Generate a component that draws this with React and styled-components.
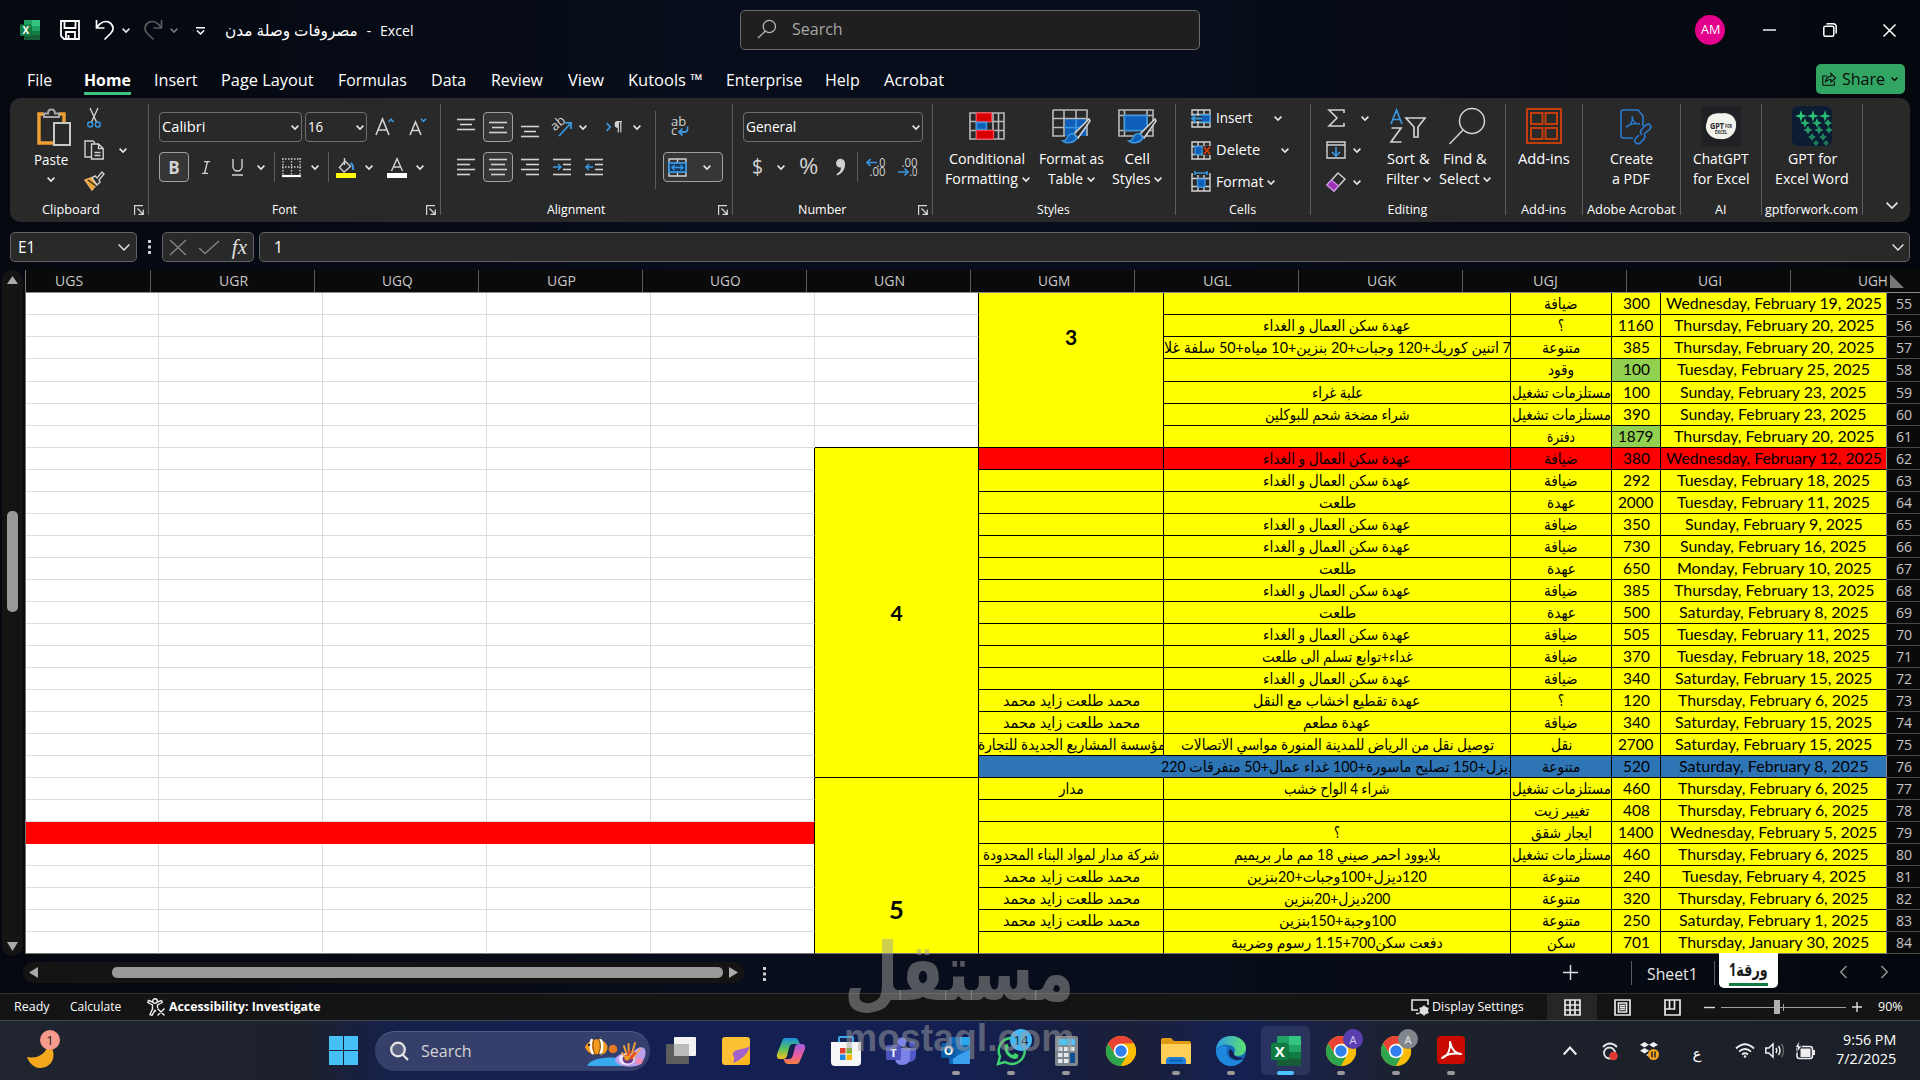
import React, { useLayoutEffect, useRef, useState } from 'react';
import styled, { createGlobalStyle } from 'styled-components';

const ui = '"Open Sans", "DejaVu Sans", sans-serif';
const sheetFont = 'Lato, "DejaVu Sans", sans-serif';

const colors = {
  ribbon: '#292929',
  line: '#5c5c5c',
  icon: '#d2d2d2',
  blue: '#3a96dd',
  deepBlue: '#0f5fb8',
  yellow: '#ffff00',
  red: '#ff0000',
  green: '#92d050',
  steel: '#2e75b6',
};

const GlobalStyle = createGlobalStyle`
  * { box-sizing: border-box; }
  body {
    margin: 0;
    background: #05080f;
    overflow: hidden;
  }
`;

/* ---------- text that keeps a given width ---------- */

const FitBox = styled.span`
  display: inline-block;
  flex: none;
  text-align: left;
  direction: ltr;
  white-space: pre;
  line-height: 1.3;
`;

const FitInner = styled.span`
  display: inline-block;
  transform-origin: 0 50%;
`;

const Fit = ({ w, rtl, children }) => {
  const ref = useRef(null);
  const [scale, setScale] = useState(1);
  useLayoutEffect(() => {
    setScale(w / ref.current.offsetWidth);
  }, [w, children]);
  return (
    <FitBox style={{ width: w }}>
      <FitInner
        ref={ref}
        dir={rtl ? 'rtl' : 'ltr'}
        style={{ transform: `scaleX(${scale})` }}
      >
        {children}
      </FitInner>
    </FitBox>
  );
};

/* ---------- icons ---------- */

const Svg = styled.svg`
  display: block;
  flex: none;
  overflow: visible;
`;

const Ico = ({ w = 20, h = 20, sw = 1.4, color = colors.icon, children }) => (
  <Svg
    width={w}
    height={h}
    viewBox={`0 0 ${w} ${h}`}
    fill="none"
    stroke={color}
    strokeWidth={sw}
  >
    {children}
  </Svg>
);

const Chevron = ({ size = 8, color = '#e6e6e6', sw = 1.6 }) => (
  <Ico w={size} h={size / 2 + 1} sw={sw} color={color}>
    <path d={`M.6 .6 L${size / 2} ${size / 2} L${size - 0.6} .6`} />
  </Ico>
);

const ExcelLogo = ({ s = 20 }) => (
  <Svg width={s} height={s} viewBox="0 0 20 20">
    <rect x="4" y="0" width="16" height="20" rx="1" fill="#21a366" />
    <path d="M12 0h7a1 1 0 0 1 1 1v5h-8z" fill="#33c481" />
    <path d="M4 6h8v5H4z" fill="#107c41" />
    <path d="M4 11h16v8a1 1 0 0 1-1 1H5a1 1 0 0 1-1-1z" fill="#185c37" />
    <path d="M12 11h8v4h-8z" fill="#107c41" />
    <rect x="0" y="4.5" width="11.5" height="11.5" rx="1" fill="#107c41" />
    <text
      x="5.8"
      y="13.8"
      fontSize="10"
      fontWeight="700"
      fill="#fff"
      textAnchor="middle"
      fontFamily="Open Sans, sans-serif"
    >
      X
    </text>
  </Svg>
);

const SaveIcon = () => (
  <Ico color="#fff" sw={1.8}>
    <path d="M1 1h18v18H4l-3-3z M4.500 1v7h11V1 M6 19v-7h9v7 M8.500 19v-4" />
  </Ico>
);

const UndoIcon = ({ color = '#fff', flip }) => (
  <Ico color={color} sw={1.7}>
    <path
      transform={flip ? 'translate(20 0) scale(-1 1)' : undefined}
      d="M1.500 0v8h8 M1.800 7.500C5 3 10 0 14.500 2.500C19 5.500 19 10 16 13L9.500 19.500"
    />
  </Ico>
);

const SearchIcon = ({ w = 18, color = '#b5b5b5' }) => (
  <Ico w={w} h={w} color={color} sw={1.3}>
    <circle cx={w * 0.63} cy={w * 0.36} r={w * 0.34} />
    <path d={`M${w * 0.4} ${w * 0.62}L0 ${w}`} />
  </Ico>
);

const PasteIcon = () => (
  <Ico w={34} h={38} sw={2}>
    <path d="M6 6H2v29h14 M22 6h5v9" stroke="#f0a030" strokeWidth="3.4" />
    <path d="M7 9V5.500h4C11 0 18 0 18 5.500h4V9z" fill="#292929" stroke="#a8a8a8" />
    <rect x="17" y="15" width="16" height="22" fill="#292929" stroke="#c8c8c8" />
  </Ico>
);

const CutIcon = () => (
  <Ico w={14} h={20}>
    <path d="M3 0l6.500 14 M11 0L4.500 14" />
    <circle cx="3.200" cy="16.500" r="2.500" stroke={colors.blue} />
    <circle cx="10.800" cy="16.500" r="2.500" stroke={colors.blue} />
  </Ico>
);

const CopyIcon = () => (
  <Ico>
    <path d="M7 17H1V1h8l2 2" />
    <path d="M7.500 4h7l4.700 4.500V19H7.500z M14.500 4v4.500h4.700 M10.500 12.500h6 M10.500 15.500h6" />
  </Ico>
);

const BrushIcon = () => (
  <Ico>
    <path d="M1 9l7 10 6-7-5-6z" fill="#f0a030" stroke="#e8b060" />
    <path d="M8 7l3-2 2 2 5-6 2 2-5 6 1 2-3 3z" fill="#292929" />
    <path d="M4 9l8 6" stroke="#292929" />
  </Ico>
);

const LauncherIcon = () => (
  <Ico w={10} h={10} sw={1.2} color="#d8d8d8">
    <path d="M9 .6H.6V10 M3.500 3.500L9 9 M9.300 4.500v4.900H4.500" />
  </Ico>
);

const BordersIcon = () => (
  <Ico w={19} h={19} sw={1.3}>
    <path d="M0 1h19 M0 9h19 M1 0v17 M9.500 0v17 M18 0v17" strokeDasharray="1.500 1.500" />
    <path d="M0 18h19" strokeWidth="2.200" stroke="#fff" />
  </Ico>
);

const FillIcon = () => (
  <Ico>
    <path d="M8 2l6.500 6.500L8 14 3.500 9.500 9 3 M8.500 0v7" />
    <path d="M14.500 5c2 1 3 3 2.500 7" stroke={colors.blue} strokeWidth="2" />
    <rect x="0" y="15" width="20" height="5" fill="#ff0" stroke="none" />
  </Ico>
);

const FontColorIcon = () => (
  <Ico>
    <path d="M4.500 13L10 .8 15.500 13 M6.500 9h7" />
    <rect x="0" y="15" width="20" height="5" fill="#fff" stroke="none" />
  </Ico>
);

const GrowIcon = ({ down }) => (
  <Ico w={19} h={18} sw={1.6}>
    <path d={down ? 'M1 17L6.500 4 12 17 M3 12.500h7' : 'M1 17L7.500 1 14 17 M3.200 12h8.600'} />
    <path
      d={down ? 'M12 .8l2.500 2.500L17 .8' : 'M13.500 4l2.500-2.700L18.500 4'}
      stroke={colors.blue}
    />
  </Ico>
);

// lines: list of [x, y, width]
const LinesIcon = ({ lines, h = 18, children }) => (
  <Ico w={18} h={h} sw={1.6}>
    {lines.map(([x, y, w]) => (
      <path key={`${x}-${y}`} d={`M${x} ${y}h${w}`} />
    ))}
    {children}
  </Ico>
);

const OrientIcon = () => (
  <Ico>
    <text
      x="0"
      y="11"
      fontSize="13"
      fill={colors.icon}
      stroke="none"
      fontFamily="Open Sans, sans-serif"
      transform="rotate(-40 6 9)"
    >
      ab
    </text>
    <path d="M7 19L19 6 M12.500 5.800H19V12" stroke={colors.blue} strokeWidth="1.800" />
  </Ico>
);

const DirectionIcon = () => (
  <Ico w={17} h={12} sw={1.2}>
    <path d="M.6 2l3.600 4-3.600 4" stroke={colors.blue} strokeWidth="1.800" />
    <path d="M16 .6h-5 M12.300 .6v11 M14.800 .6v11" />
    <path d="M12 .6a2.800 2.800 0 0 0 0 5.600z" fill={colors.icon} />
  </Ico>
);

const WrapIcon = () => (
  <Ico w={18} h={20}>
    <text x="0" y="9" fontSize="13" fill={colors.icon} stroke="none" fontFamily="Open Sans, sans-serif">
      ab
    </text>
    <text x="0" y="18" fontSize="13" fill={colors.icon} stroke="none" fontFamily="Open Sans, sans-serif">
      c
    </text>
    <path d="M16.500 9.500v3c0 2-1 2.500-3 2.500H8.500 M11.500 11.500L8 15l3.500 3.500" stroke={colors.blue} strokeWidth="1.800" />
  </Ico>
);

const MergeIcon = () => (
  <Ico w={19} h={19}>
    <path d="M1 1h17v17H1z M9.500 1v4 M9.500 14v4" />
    <rect x="1" y="5" width="17" height="9" fill="#123a60" stroke={colors.blue} strokeWidth="1.800" />
    <path d="M4 9.500h11 M6.500 7L4 9.500 6.500 12 M12.500 7L15 9.500 12.500 12" stroke={colors.blue} />
  </Ico>
);

const DecimalIcon = ({ more }) => (
  <Ico w={20} h={20}>
    <text
      x="19.500"
      y="9.500"
      fontSize="12"
      textAnchor="end"
      fill={colors.icon}
      stroke="none"
      fontFamily="Open Sans, sans-serif"
      textLength={more ? 9 : 16}
      lengthAdjust="spacingAndGlyphs"
    >
      {more ? '.0' : '.00'}
    </text>
    <text
      x="19.500"
      y="19"
      fontSize="12"
      textAnchor="end"
      fill={colors.icon}
      stroke="none"
      fontFamily="Open Sans, sans-serif"
      textLength={more ? 16 : 8}
      lengthAdjust="spacingAndGlyphs"
    >
      {more ? '.00' : '.0'}
    </text>
    <path
      d={more ? 'M11 5.500H1 M4.500 2L1 5.500 4.500 9' : 'M0 15h10 M6.500 11.500L10 15l-3.500 3.500'}
      stroke={colors.blue}
      strokeWidth="1.700"
    />
  </Ico>
);

const ConditionalIcon = () => (
  <Ico w={36} h={28} sw={1.6} color="#b8b8b8">
    <path d="M1 1h34v26H1z M1 9.500h34 M1 18.500h34 M7.500 1v26 M24 1v26 M29.500 1v26" />
    <rect x="7.500" y="1" width="15" height="8.500" fill="#d80000" stroke="#ff4050" strokeWidth="1.200" />
    <rect x="7.500" y="10.500" width="10" height="7" fill={colors.deepBlue} stroke={colors.blue} />
    <rect x="7.500" y="18.500" width="17" height="8.500" fill="#d80000" stroke="#ff4050" strokeWidth="1.200" />
  </Ico>
);

const BrushOver = () => (
  <>
    <path d="M37 10L22 25l4 4L38 12z" fill="#292929" stroke="#d8d8d8" strokeWidth="1.500" />
    <path d="M22 25c-4-1-6 1-7 4-1 2-2 3-4 3 4 3 11 2 14-3z" fill={colors.deepBlue} stroke={colors.blue} />
  </>
);

const TableIcon = () => (
  <Ico w={38} h={34} sw={1.6} color="#b8b8b8">
    <path d="M13 10h22v17H13z" fill={colors.deepBlue} stroke="none" />
    <path d="M1 1h34v26 M13 27H1V1 M1 9.500h34 M1 18.500h11 M12 1v26 M24 1v9" />
    <path d="M12 18.500h23 M24 10v17" stroke={colors.blue} />
    <BrushOver />
  </Ico>
);

const StylesIcon = () => (
  <Ico w={38} h={34} sw={1.6} color="#b8b8b8">
    <path d="M1 1h34v26H1z M1 6.500h34 M1 21.500h34 M6.500 1v26 M29 1v26" />
    <rect x="6.500" y="6.500" width="22.500" height="15" fill={colors.deepBlue} stroke={colors.blue} />
    <BrushOver />
  </Ico>
);

const CellsIcon = ({ kind }) => (
  <Ico w={20} h={19} sw={1.4}>
    <path d="M1 1h18v17H1z M1 5.500h18 M1 13.500h18 M7 1v17 M13 1v17" />
    {kind === 'insert' && (
      <>
        <path d="M9 6h10v7H9z" fill={colors.deepBlue} stroke={colors.blue} />
        <path d="M11 9.500H0" stroke="#292929" strokeWidth="5" />
        <path d="M11 9.500H1 M5 5.500L1 9.500l4 4" stroke={colors.blue} strokeWidth="1.800" />
      </>
    )}
    {kind === 'delete' && (
      <>
        <rect x="4" y="5.500" width="7" height="8" fill={colors.deepBlue} stroke={colors.blue} />
        <path d="M12 5h8v9h-8z" fill="#292929" stroke="none" />
        <path d="M13 6l6 7 M19 6l-6 7" stroke="#d83b01" strokeWidth="1.800" />
      </>
    )}
    {kind === 'format' && (
      <>
        <rect x="6.500" y="6" width="7.500" height="8" fill={colors.deepBlue} stroke={colors.blue} />
        <path d="M2 -2h16v4H2z" fill="#292929" stroke="none" />
        <path d="M4 0h12 M4 -2v4 M16 -2v4" stroke={colors.blue} strokeWidth="1.600" />
      </>
    )}
  </Ico>
);

const SigmaIcon = () => (
  <Ico w={17} h={18} sw={1.6}>
    <path d="M16 4V1H1l8 8-8 8h15v-3" />
  </Ico>
);

const FillDownIcon = () => (
  <Ico w={20} h={18}>
    <path d="M1 1h18v16H1z M1 4h18" />
    <path d="M10 6v9 M6 11l4 4 4-4" stroke={colors.blue} strokeWidth="1.700" />
  </Ico>
);

const EraserIcon = () => (
  <Ico w={20} h={20}>
    <path d="M12 1l7 6-11 12-7-6z" />
    <path d="M5.500 8l7 6L8 19l-7-6z" fill="#a02fb0" stroke="#c58be8" />
  </Ico>
);

const SortIcon = () => (
  <Ico w={36} h={34} sw={1.7}>
    <path d="M1 15L6.500 1 12 15 M3 10.500h7" stroke={colors.blue} />
    <path d="M1.500 19h9.500L1 33h10.500" />
    <path d="M16 9h19L28 18v10h-4V18z" />
  </Ico>
);

const FindIcon = () => (
  <Ico w={33} h={36} sw={1.5}>
    <circle cx="23" cy="13" r="12.500" />
    <path d="M14 22L.5 36" />
  </Ico>
);

const AddinsIcon = () => (
  <Ico w={36} h={36} color="#c43e0c" sw={2}>
    <path d="M1 1h34v34H1z M5 5h11.500v11H5z M19.500 5H31v11H19.500z M5 20h11.500v11H5z M19.500 20H31v11H19.500z" />
  </Ico>
);

const PdfIcon = () => (
  <Ico w={23} h={35} color="#2b7cd3" sw={1.6}>
    <path d="M13 29H3q-2 0-2-2V3q0-2 2-2h15l5 6v10" />
    <path d="M6 18c5-1 7-6 6-11 1 6 3 8 8 8-6-1-10 0-14 3z" strokeWidth="1.300" />
    <path d="M19 26l-3 3q-3 3 0 5t5-1l3-3q2-3 0-5 M24 25l5-4q3-3 1-5t-5 1l-3 3q-3 3 0 6" />
  </Ico>
);

const ChatGptIcon = () => (
  <Svg width="40" height="40" viewBox="0 0 40 40">
    <rect width="40" height="40" fill="#202124" />
    <path d="M7 12C12 5 20 8 24 7c9 1 12 8 11 14-1 8-8 13-16 12C9 33 4 25 5 19z" fill="#f3f3ee" />
    <text x="9" y="23" fontSize="9" fontWeight="700" fill="#222" fontFamily="Open Sans, sans-serif" textLength="14" lengthAdjust="spacingAndGlyphs">
      GPT
    </text>
    <text x="24" y="22" fontSize="4.500" fontWeight="700" fill="#222" fontFamily="Open Sans, sans-serif" textLength="7" lengthAdjust="spacingAndGlyphs">
      FOR
    </text>
    <text x="14" y="28" fontSize="5" fontWeight="700" fill="#222" fontFamily="Open Sans, sans-serif" textLength="12" lengthAdjust="spacingAndGlyphs">
      EXCEL
    </text>
  </Svg>
);

const stars = [
  [9, 10, 6], [21, 10, 6], [33, 10, 6],
  [13, 17, 5], [25, 17, 5], [36, 17, 4],
  [16, 24, 4.6], [27, 24, 4.6], [37, 24, 3.6],
  [20, 31, 4], [31, 31, 4],
  [24, 37, 3], [34, 37, 3],
];

const StarsIcon = () => (
  <Svg width="40" height="40" viewBox="0 0 40 40">
    <rect width="40" height="40" rx="6" fill="#0b1c33" />
    {stars.map(([x, y, r], i) => (
      <path
        key={`${x}-${y}`}
        d={`M${x} ${y - r}L${x + 1.4} ${y - 1.4} ${x + r} ${y} ${x + 1.4} ${y + 1.4} ${x} ${y + r} ${x - 1.4} ${y + 1.4} ${x - r} ${y} ${x - 1.4} ${y - 1.4}z`}
        fill="#2ec878"
        opacity={1 - i * 0.04}
      />
    ))}
  </Svg>
);

/* ---------- window ---------- */

const Screen = styled.div`
  position: relative;
  width: 1920px;
  height: 1080px;
  overflow: hidden;
  display: flex;
  flex-direction: column;
  font-family: ${ui};
  color: #fff;
  background: linear-gradient(90deg, #05080f 0, #070d1a 35%, #070d1b 60%, #04070d 100%);
`;

const Row = styled.div`
  display: flex;
  align-items: center;
  height: ${p => (p.$h ? `${p.$h}px` : 'auto')};
  margin-top: ${p => p.$mt || 0}px;
`;

const Slot = styled.div`
  display: flex;
  flex: none;
  align-items: center;
  justify-content: center;
  width: ${p => (p.$w ? `${p.$w}px` : 'auto')};
  height: ${p => (p.$h ? `${p.$h}px` : 'auto')};
  margin-left: ${p => p.$ml || 0}px;
  margin-top: ${p => p.$mt || 0}px;
  font-size: ${p => p.$size || 15}px;
  font-weight: ${p => p.$weight || 400};
  color: ${p => p.$color || 'inherit'};
`;

const TitleBar = styled.header`
  display: flex;
  align-items: center;
  height: 60px;
  flex: none;
`;

const SearchBox = styled.div`
  display: flex;
  align-items: center;
  width: 460px;
  height: 40px;
  margin-left: 326px;
  padding: 0 0 2px 17px;
  background: #1f1f1f;
  border: 1px solid #6b6b6b;
  border-radius: 5px;
  color: #a6a6a6;
  font-size: 16px;
`;

const Avatar = styled.div`
  display: flex;
  align-items: center;
  justify-content: center;
  width: 30px;
  height: 30px;
  margin-left: 495px;
  border-radius: 50%;
  background: #e3008c;
  font-size: 12px;
`;

const Tabs = styled.nav`
  display: flex;
  align-items: flex-start;
  height: 38px;
  flex: none;
  padding-top: 4px;
  font-size: 16.5px;
`;

const Tab = styled.div`
  height: 31px;
  padding-top: 4px;
  margin-left: ${p => p.$ml}px;
  font-weight: ${p => (p.$active ? 700 : 400)};
  border-bottom: 3px solid ${p => (p.$active ? '#3fc380' : 'transparent')};
  border-radius: 1px;
`;

const Share = styled.div`
  display: flex;
  align-items: center;
  gap: 6px;
  width: 89px;
  height: 30px;
  margin-left: 872px;
  padding-left: 6px;
  background: #33a563;
  border-radius: 5px;
  color: #0a0a0a;
  font-size: 16px;
`;

const RibbonBar = styled.section`
  display: flex;
  width: 1900px;
  height: 124px;
  flex: none;
  margin-left: 10px;
  background: ${colors.ribbon};
  border-radius: 10px;
`;

const Group = styled.div`
  display: flex;
  flex-direction: column;
  width: ${p => p.$w}px;
  flex: none;
`;

const GroupBody = styled.div`
  display: flex;
  flex-direction: ${p => (p.$column ? 'column' : 'row')};
  height: 102px;
`;

const GroupLabel = styled.div`
  display: flex;
  align-items: center;
  height: 20px;
  font-size: 12.5px;
`;

const LabelText = styled.div`
  display: flex;
  flex: 1;
  justify-content: center;
  margin-top: 1px;
  padding-right: ${p => p.$pr}px;
`;

const Launcher = styled.div`
  width: 14px;
  padding-right: 4px;
`;

const Separator = styled.div`
  width: 1px;
  flex: none;
  height: ${p => p.$h || 111}px;
  margin-top: ${p => (p.$mt === undefined ? 6 : p.$mt)}px;
  margin-left: ${p => p.$ml || 0}px;
  background: ${colors.line};
`;

const Combo = styled.div`
  display: flex;
  align-items: center;
  justify-content: space-between;
  flex: none;
  width: ${p => p.$w}px;
  height: 30px;
  margin-left: ${p => p.$ml || 0}px;
  padding: 0 2px;
  border: 1px solid #6e6e6e;
  border-radius: 4px;
  font-size: 15px;
`;

const Pressed = styled.div`
  display: flex;
  align-items: center;
  justify-content: ${p => (p.$pl ? 'flex-start' : 'center')};
  gap: 16px;
  flex: none;
  width: ${p => p.$w || 30}px;
  height: 30px;
  margin-left: ${p => p.$ml || 0}px;
  padding-left: ${p => p.$pl || 0}px;
  background: #363636;
  border: 1px solid #a0a0a0;
  border-radius: 4px;
`;

const Stack = styled.div`
  display: flex;
  flex-direction: column;
  flex: none;
  width: ${p => (p.$w ? `${p.$w}px` : 'auto')};
  margin-left: ${p => p.$ml || 0}px;
  padding-top: ${p => p.$pt || 0}px;
`;

const BigButton = styled.div`
  display: flex;
  flex-direction: column;
  align-items: center;
  flex: none;
  width: ${p => p.$w}px;
  margin-left: ${p => p.$ml || 0}px;
  padding-top: 8px;
  font-size: 15px;
`;

const BigIcon = styled.div`
  display: flex;
  align-items: center;
  justify-content: center;
  height: 40px;
  margin-bottom: 3px;
`;

const Line = styled.div`
  display: flex;
  align-items: center;
  gap: 4px;
  height: 20px;
`;

const RibbonGroup = ({ w, label, labelW, labelPad = 1, launcher, column, children }) => (
  <>
    <Group $w={w - 1}>
      <GroupBody $column={column}>{children}</GroupBody>
      <GroupLabel>
        <LabelText $pr={labelPad}>
          <Fit w={labelW}>{label}</Fit>
        </LabelText>
        {launcher && (
          <Launcher>
            <LauncherIcon />
          </Launcher>
        )}
      </GroupLabel>
    </Group>
    <Separator />
  </>
);

const Big = ({ w, ml, icon, lines, arrow }) => (
  <BigButton $w={w} $ml={ml}>
    <BigIcon>{icon}</BigIcon>
    {lines.map(([text, width], i) => (
      <Line key={text}>
        <Fit w={width}>{text}</Fit>
        {arrow && i === lines.length - 1 && <Chevron />}
      </Line>
    ))}
  </BigButton>
);

const tabs = [
  ['File', 25, 27], ['Home', 47, 32, true], ['Insert', 43, 23],
  ['Page Layout', 93, 24], ['Formulas', 69, 24], ['Data', 35, 24],
  ['Review', 52, 25], ['View', 36, 25], ['Kutools ™', 75, 24],
  ['Enterprise', 76, 23], ['Help', 35, 23], ['Acrobat', 60, 24],
];

const Ribbon = () => (
  <RibbonBar>
    <RibbonGroup w={139} label="Clipboard" labelW={58} labelPad={2} launcher>
      <BigButton $w={34} $ml={24}>
        <Slot $h={42} $ml={6}><PasteIcon /></Slot>
        <Slot $h={24}><Fit w={34}>Paste</Fit></Slot>
        <Slot $h={14}><Chevron /></Slot>
      </BigButton>
      <Stack $ml={16} $w={20} $pt={4}>
        <Slot $h={32}><CutIcon /></Slot>
        <Slot $h={32}><CopyIcon /></Slot>
        <Slot $h={30}><BrushIcon /></Slot>
      </Stack>
      <Slot $ml={15} $h={104}><Chevron /></Slot>
    </RibbonGroup>

    <RibbonGroup w={292} label="Font" labelW={25} labelPad={7} launcher column>
      <Row $h={30} $mt={14}>
        <Combo $w={143} $ml={10}><Fit w={43}>Calibri</Fit><Chevron /></Combo>
        <Combo $w={62} $ml={3}><Fit w={15}>16</Fit><Chevron /></Combo>
        <Slot $ml={8}><GrowIcon /></Slot>
        <Slot $ml={15}><GrowIcon down /></Slot>
      </Row>
      <Row $h={30} $mt={10}>
        <Pressed $ml={10}><Slot $weight={700} $size={17} $color="#d2d2d2">B</Slot></Pressed>
        <Slot $ml={10} $w={14}>
          <Ico w={10} h={13}><path d="M3 .6h6 M1 12.400h6 M6.500 .6l-3 12" /></Ico>
        </Slot>
        <Slot $ml={17} $w={14}>
          <Ico w={11} h={17}><path d="M1 0v7.500a4.500 4.500 0 0 0 9 0V0 M0 16h11" /></Ico>
        </Slot>
        <Slot $ml={13}><Chevron /></Slot>
        <Separator $h={30} $mt={0} $ml={9} />
        <Slot $ml={7}><BordersIcon /></Slot>
        <Slot $ml={10}><Chevron /></Slot>
        <Separator $h={30} $mt={0} $ml={9} />
        <Slot $ml={7} $mt={2}><FillIcon /></Slot>
        <Slot $ml={9}><Chevron /></Slot>
        <Slot $ml={14} $mt={2}><FontColorIcon /></Slot>
        <Slot $ml={9}><Chevron /></Slot>
      </Row>
    </RibbonGroup>

    <RibbonGroup w={292} label="Alignment" labelW={58} labelPad={7} launcher>
      <Stack $ml={16} $w={198}>
        <Row $h={30} $mt={14}>
          <LinesIcon lines={[[0, 5.5, 18], [3, 10.5, 12], [0, 15.5, 18]]} h={26} />
          <Pressed $ml={8}>
            <LinesIcon lines={[[0, 4.5, 18], [3, 9.5, 12], [0, 14.5, 18]]} />
          </Pressed>
          <Slot $ml={8}>
            <LinesIcon lines={[[0, 10.5, 18], [3, 15.5, 12], [0, 20.5, 18]]} h={22} />
          </Slot>
          <Slot $ml={13}><OrientIcon /></Slot>
          <Slot $ml={7}><Chevron /></Slot>
          <Slot $ml={19}><DirectionIcon /></Slot>
          <Slot $ml={10}><Chevron /></Slot>
        </Row>
        <Row $h={30} $mt={10}>
          <LinesIcon lines={[[0, 1.5, 18], [0, 6.5, 13], [0, 11.5, 18], [0, 16.5, 13]]} />
          <Pressed $ml={8}>
            <LinesIcon lines={[[0, 1.5, 18], [2, 6.5, 14], [0, 11.5, 18], [2, 16.5, 14]]} />
          </Pressed>
          <Slot $ml={8}>
            <LinesIcon lines={[[0, 1.5, 18], [5, 6.5, 13], [0, 11.5, 18], [5, 16.5, 13]]} />
          </Slot>
          <Slot $ml={14}>
            <LinesIcon lines={[[0, 1.5, 18], [10, 6.5, 8], [10, 11.5, 8], [0, 16.5, 18]]}>
              <path d="M0 9h8 M5 6l3 3-3 3" stroke={colors.blue} />
            </LinesIcon>
          </Slot>
          <Slot $ml={14}>
            <LinesIcon lines={[[0, 1.5, 18], [10, 6.5, 8], [10, 11.5, 8], [0, 16.5, 18]]}>
              <path d="M8 9H1 M4 6L1 9l3 3" stroke={colors.blue} />
            </LinesIcon>
          </Slot>
        </Row>
      </Stack>
      <Separator $h={78} $mt={13} />
      <Stack $ml={7}>
        <Row $h={30} $mt={14}>
          <Slot $ml={8}><WrapIcon /></Slot>
        </Row>
        <Row $h={30} $mt={10}>
          <Pressed $w={60} $pl={4}><MergeIcon /><Chevron /></Pressed>
        </Row>
      </Stack>
    </RibbonGroup>

    <RibbonGroup w={200} label="Number" labelW={48} labelPad={7} launcher column>
      <Row $h={30} $mt={14}>
        <Combo $w={180} $ml={10}><Fit w={50}>General</Fit><Chevron /></Combo>
      </Row>
      <Row $h={30} $mt={10}>
        <Slot $ml={19} $w={11} $size={21} $color={colors.icon}><Fit w={11}>$</Fit></Slot>
        <Slot $ml={14}><Chevron /></Slot>
        <Slot $ml={14} $w={19} $size={21} $color={colors.icon}><Fit w={19}>%</Fit></Slot>
        <Slot $ml={17}>
          <Ico w={11} h={18} color="none">
            <path d="M1 5a4.500 4.500 0 1 1 9 0.500C10.500 11 7 16 2 17.500L1.500 16C5 14 6 12 6 9.500 3 10 1 8 1 5z" fill={colors.icon} />
          </Ico>
        </Slot>
        <Separator $h={30} $mt={0} $ml={11} />
        <Slot $ml={8}><DecimalIcon more /></Slot>
        <Slot $ml={12}><DecimalIcon /></Slot>
      </Row>
    </RibbonGroup>

    <RibbonGroup w={243} label="Styles" labelW={33}>
      <Big w={88} ml={10} icon={<ConditionalIcon />} lines={[['Conditional', 76], ['Formatting', 73]]} arrow />
      <Big w={66} ml={7} icon={<TableIcon />} lines={[['Format as', 65], ['Table', 35]]} arrow />
      <Big w={54} ml={6} icon={<StylesIcon />} lines={[['Cell', 25], ['Styles', 38]]} arrow />
    </RibbonGroup>

    <RibbonGroup w={135} label="Cells" labelW={27}>
      <Stack $ml={15} $pt={4}>
        <Row $h={32}>
          <CellsIcon kind="insert" />
          <Slot $ml={5}><Fit w={36}>Insert</Fit></Slot>
          <Slot $ml={22}><Chevron /></Slot>
        </Row>
        <Row $h={32}>
          <CellsIcon kind="delete" />
          <Slot $ml={5}><Fit w={44}>Delete</Fit></Slot>
          <Slot $ml={21}><Chevron /></Slot>
        </Row>
        <Row $h={32}>
          <CellsIcon kind="format" />
          <Slot $ml={5}><Fit w={47}>Format</Fit></Slot>
          <Slot $ml={4}><Chevron /></Slot>
        </Row>
      </Stack>
    </RibbonGroup>

    <RibbonGroup w={195} label="Editing" labelW={40}>
      <Stack $ml={15} $pt={4} $w={57}>
        <Row $h={32}>
          <Slot $w={20}><SigmaIcon /></Slot>
          <Slot $ml={15}><Chevron /></Slot>
        </Row>
        <Row $h={32}>
          <FillDownIcon />
          <Slot $ml={7}><Chevron /></Slot>
        </Row>
        <Row $h={32}>
          <EraserIcon />
          <Slot $ml={7}><Chevron /></Slot>
        </Row>
      </Stack>
      <Big w={48} ml={1} icon={<SortIcon />} lines={[['Sort &', 43], ['Filter', 33]]} arrow />
      <Big w={54} ml={6} icon={<FindIcon />} lines={[['Find &', 44], ['Select', 40]]} arrow />
    </RibbonGroup>

    <RibbonGroup w={77} label="Add-ins" labelW={45}>
      <Big w={76} icon={<AddinsIcon />} lines={[['Add-ins', 52]]} />
    </RibbonGroup>
    <RibbonGroup w={98} label="Adobe Acrobat" labelW={89}>
      <Big w={96} icon={<PdfIcon />} lines={[['Create', 43], ['a PDF', 38]]} />
    </RibbonGroup>
    <RibbonGroup w={81} label="AI" labelW={11}>
      <Big w={80} icon={<ChatGptIcon />} lines={[['ChatGPT', 56], ['for Excel', 57]]} />
    </RibbonGroup>
    <RibbonGroup w={101} label="gptforwork.com" labelW={93}>
      <Big w={100} icon={<StarsIcon />} lines={[['GPT for', 49], ['Excel Word', 74]]} />
    </RibbonGroup>
    <Slot $ml={23} $mt={91} $h={32}><Chevron size={12} /></Slot>
  </RibbonBar>
);

/* ---------- formula bar ---------- */

const FormulaRow = styled.section`
  display: flex;
  align-items: center;
  height: 30px;
  flex: none;
  margin: 10px 10px 0;
`;

const Field = styled.div`
  display: flex;
  align-items: center;
  justify-content: space-between;
  width: ${p => p.$w}px;
  height: 30px;
  margin-left: ${p => p.$ml || 0}px;
  padding: 0 ${p => p.$pr || 6}px 0 ${p => p.$pl || 7}px;
  background: ${colors.ribbon};
  border: 1px solid #636363;
  border-radius: 5px;
  font-size: 15.5px;
`;

const Fx = styled.span`
  font: italic 21px "Liberation Serif", serif;
  color: #e0e0e0;
`;

const Dots = ({ gap = 5 }) => (
  <Svg width="3" height="14" viewBox="0 0 3 14" fill="#d0d0d0">
    <rect y="0" width="3" height="3" />
    <rect y={gap + 0.5} width="3" height="3" />
    <rect y={gap * 2 + 1} width="3" height="3" />
  </Svg>
);

const FormulaBar = () => (
  <FormulaRow>
    <Field $w={127}>
      <Fit w={17}>E1</Fit>
      <Chevron size={12} sw={1.4} />
    </Field>
    <Slot $ml={11}><Dots /></Slot>
    <Field $w={92} $ml={11}>
      <Ico w={16} h={15} color="#858585"><path d="M0 0l16 15 M16 0L0 15" /></Ico>
      <Ico w={20} h={13} color="#858585"><path d="M0 7l6 5.500L20 0" /></Ico>
      <Fx>fx</Fx>
    </Field>
    <Field $w={1651} $ml={5} $pl={14} $pr={5}>
      <span>1</span>
      <Chevron size={12} sw={1.4} />
    </Field>
  </FormulaRow>
);

/* ---------- sheet ---------- */

const longMixed = '70 اتنين كوريك+120 وجبات+20 بنزين+10 مياه+50 سلفة غلا';

const widths = {
  'عهدة سكن العمال و الغداء': 148,
  'علبة غراء': 51,
  'شراء مضخة شحم للبوكلين': 145,
  'طلعت': 37,
  'غداء+توابع تسلم الى طلعت': 151,
  'عهدة تقطيع اخشاب مع النقل': 168,
  'عهدة مطعم': 68,
  'توصيل نقل من الرياض للمدينة المنورة مواسي الاتصالات': 313,
  'شراء 4 الواح خشب': 106,
  'بلايوود احمر صيني 18 مم مار بريميم': 207,
  '120ديزل+100وجبات+20بنزين': 180,
  '200ديزل+20بنزين': 106,
  '100وجبة+150بنزين': 117,
  'دفعت سكن700+1.15 رسوم وضريبة': 212,
  [longMixed]: 355,
  'ديزل+150 تصليح ماسورة+100 غداء عمال+50 متفرقات 220': 353,
  'ضيافة': 34,
  '؟': 6,
  'متنوعة': 38,
  'وقود': 26,
  'مستلزمات تشغيل': 99,
  'دفترة': 28,
  'عهدة': 29,
  'نقل': 21,
  'تغيير زيت': 55,
  'ايجار شقق': 61,
  'سكن': 29,
  'محمد طلعت زايد محمد': 137,
  'مؤسسة المشاريع الجديدة للتجارة': 187,
  'مدار': 25,
  'شركة مدار لمواد البناء المحدودة': 176,
};

const ghada = 'عهدة سكن العمال و الغداء';
const person = 'محمد طلعت زايد محمد';

// number, supplier, description, category, amount, date, date width
const rows = [
  [55, '', '', 'ضيافة', '300', 'Wednesday, February 19, 2025', 216],
  [56, '', ghada, '؟', '1160', 'Thursday, February 20, 2025', 200],
  [57, '', longMixed, 'متنوعة', '385', 'Thursday, February 20, 2025', 200],
  [58, '', '', 'وقود', '100', 'Tuesday, February 25, 2025', 193],
  [59, '', 'علبة غراء', 'مستلزمات تشغيل', '100', 'Sunday, February 23, 2025', 187],
  [60, '', 'شراء مضخة شحم للبوكلين', 'مستلزمات تشغيل', '390', 'Sunday, February 23, 2025', 187],
  [61, '', '', 'دفترة', '1879', 'Thursday, February 20, 2025', 200],
  [62, '', ghada, 'ضيافة', '380', 'Wednesday, February 12, 2025', 216],
  [63, '', ghada, 'ضيافة', '292', 'Tuesday, February 18, 2025', 193],
  [64, '', 'طلعت', 'عهدة', '2000', 'Tuesday, February 11, 2025', 193],
  [65, '', ghada, 'ضيافة', '350', 'Sunday, February 9, 2025', 178],
  [66, '', ghada, 'ضيافة', '730', 'Sunday, February 16, 2025', 187],
  [67, '', 'طلعت', 'عهدة', '650', 'Monday, February 10, 2025', 194],
  [68, '', ghada, 'ضيافة', '385', 'Thursday, February 13, 2025', 200],
  [69, '', 'طلعت', 'عهدة', '500', 'Saturday, February 8, 2025', 189],
  [70, '', ghada, 'ضيافة', '505', 'Tuesday, February 11, 2025', 193],
  [71, '', 'غداء+توابع تسلم الى طلعت', 'ضيافة', '370', 'Tuesday, February 18, 2025', 193],
  [72, '', ghada, 'ضيافة', '340', 'Saturday, February 15, 2025', 197],
  [73, person, 'عهدة تقطيع اخشاب مع النقل', '؟', '120', 'Thursday, February 6, 2025', 191],
  [74, person, 'عهدة مطعم', 'ضيافة', '340', 'Saturday, February 15, 2025', 197],
  [75, 'مؤسسة المشاريع الجديدة للتجارة', 'توصيل نقل من الرياض للمدينة المنورة مواسي الاتصالات', 'نقل', '2700', 'Saturday, February 15, 2025', 197],
  [76, '', 'ديزل+150 تصليح ماسورة+100 غداء عمال+50 متفرقات 220', 'متنوعة', '520', 'Saturday, February 8, 2025', 189],
  [77, 'مدار', 'شراء 4 الواح خشب', 'مستلزمات تشغيل', '460', 'Thursday, February 6, 2025', 191],
  [78, '', '', 'تغيير زيت', '408', 'Thursday, February 6, 2025', 191],
  [79, '', '؟', 'ايجار شقق', '1400', 'Wednesday, February 5, 2025', 207],
  [80, 'شركة مدار لمواد البناء المحدودة', 'بلايوود احمر صيني 18 مم مار بريميم', 'مستلزمات تشغيل', '460', 'Thursday, February 6, 2025', 191],
  [81, person, '120ديزل+100وجبات+20بنزين', 'متنوعة', '240', 'Tuesday, February 4, 2025', 184],
  [82, person, '200ديزل+20بنزين', 'متنوعة', '320', 'Thursday, February 6, 2025', 191],
  [83, person, '100وجبة+150بنزين', 'متنوعة', '250', 'Saturday, February 1, 2025', 189],
  [84, '', 'دفعت سكن700+1.15 رسوم وضريبة', 'سكن', '701', 'Thursday, January 30, 2025', 191],
];

const rowHeight = n => (n === 58 ? 23 : 22);
const rowColor = n => {
  if (n === 62) return colors.red;
  if (n === 76) return colors.steel;
  return colors.yellow;
};

const Workspace = styled.main`
  display: flex;
  height: 684px;
  flex: none;
  margin-top: 8px;
`;

const VScroll = styled.div`
  display: flex;
  flex-direction: column;
  align-items: center;
  width: 21px;
  height: 686px;
  margin: 0 2px;
  padding: 6px 0 5px;
  background: #141414;
  border-radius: 10px;
`;

const VThumb = styled.div`
  width: 11px;
  height: 101px;
  margin: 227px 0 auto;
  background: #999;
  border-radius: 5px;
`;

const Sheet = styled.div`
  width: 1895px;
  border-left: 1px solid #777;
`;

const HeaderRow = styled.div`
  display: flex;
  height: 23px;
  background: #0a0a0a;
  border-bottom: 1px solid #8a8a8a;
  font-size: 15px;
  color: #c8c8c8;
`;

const HeaderCell = styled.div`
  display: flex;
  align-items: center;
  justify-content: ${p => (p.$last ? 'flex-end' : 'center')};
  width: ${p => p.$w}px;
  flex: none;
  padding: 0 ${p => p.$pr || 0}px 0 ${p => p.$pl || 0}px;
  border-right: ${p => (p.$last ? 'none' : '1px solid #5a5a5a')};
`;

const SheetBody = styled.div`
  display: flex;
  height: 661px;
  background: #fff;
  font: 15.2px ${sheetFont};
  color: #000;
`;

const Column = styled.div`
  width: ${p => p.$w}px;
  flex: none;
`;

const BlankRow = styled.div`
  display: flex;
  height: ${p => p.$h}px;
  background: ${p => (p.$red ? colors.red : '#fff')};
`;

const BlankCell = styled.div`
  width: ${p => p.$w}px;
  border-right: 1px solid ${p => p.$line};
  border-bottom: 1px solid ${p => p.$bottom};
`;

const MergedCell = styled.div`
  display: flex;
  justify-content: center;
  height: ${p => p.$h}px;
  padding-top: ${p => p.$pt}px;
  background: ${colors.yellow};
  border-right: 1px solid #000;
  border-bottom: 1px solid ${p => (p.$open ? '#777' : '#000')};
  font-weight: 700;
  font-size: ${p => p.$size}px;
  line-height: 1;
`;

const DataRow = styled.div`
  display: flex;
  height: ${p => p.$h}px;
`;

const Cell = styled.div`
  display: flex;
  align-items: center;
  justify-content: ${p => p.$align || 'center'};
  width: ${p => p.$w}px;
  height: ${p => (p.$h ? `${p.$h}px` : '100%')};
  flex: none;
  overflow: ${p => (p.$spill ? 'visible' : 'hidden')};
  clip-path: ${p => (p.$spill ? 'inset(0 0 0 -8px)' : 'none')};
  background: ${p => p.$bg};
  border-right: 1px solid ${p => p.$right || '#000'};
  border-bottom: 1px solid ${p => (p.$open ? '#777' : '#000')};
`;

const RowNumber = styled.div`
  display: flex;
  align-items: center;
  justify-content: center;
  height: ${p => p.$h}px;
  background: #0a0a0a;
  border-bottom: 1px solid #4a4a4a;
  color: #c4c4c4;
  font: 15px ${ui};
`;

const Arabic = ({ children }) =>
  children ? <Fit rtl w={widths[children]}>{children}</Fit> : null;

const headers = ['UGR', 'UGQ', 'UGP', 'UGO', 'UGN', 'UGM', 'UGL', 'UGK', 'UGJ', 'UGI'];
const headerWidths = { UGI: 24, UGJ: 25, UGM: 32, UGN: 31, UGQ: 31, UGO: 31 };
const blankCols = [133, 164, 164, 164, 164];

const Grid = () => (
  <Sheet>
    <HeaderRow>
      <HeaderCell $w={125} $pr={38}><Fit w={28}>UGS</Fit></HeaderCell>
      {headers.map(h => (
        <HeaderCell key={h} $w={164} $pl={2}><Fit w={headerWidths[h] || 29}>{h}</Fit></HeaderCell>
      ))}
      <HeaderCell $w={97} $last><Fit w={30}>UGH</Fit></HeaderCell>
      <Slot $ml={2}>
        <Svg width="14" height="14"><path d="M0 0v14h14z" fill="#777" /></Svg>
      </Slot>
    </HeaderRow>
    <SheetBody>
      <Column $w={789}>
        {rows.map(([n]) => (
          <BlankRow key={n} $h={rowHeight(n)} $red={n === 79}>
            {blankCols.map((w, i) => {
              const edge = i === blankCols.length - 1 && n > 61;
              const grey = n === 79 ? colors.red : '#dcdcdc';
              return (
                <BlankCell
                  key={i}
                  $w={w}
                  $line={edge ? '#000' : grey}
                  $bottom={n === 84 ? '#777' : grey}
                />
              );
            })}
          </BlankRow>
        ))}
      </Column>
      <Column $w={164}>
        {rows.slice(0, 7).map(([n]) => (
          <BlankRow key={n} $h={rowHeight(n)}>
            <BlankCell $w={164} $line="#000" $bottom={n === 61 ? '#000' : '#dcdcdc'} />
          </BlankRow>
        ))}
        <MergedCell $h={330} $pt={154} $size={21}>4</MergedCell>
        <MergedCell $h={176} $pt={119} $size={25.5} $open>5</MergedCell>
      </Column>
      <Column $w={185}>
        <MergedCell $h={155} $pt={33} $size={21}>3</MergedCell>
        {rows.slice(7).map(([n, supplier]) => (
          <Cell
            key={n}
            $w={185}
            $h={22}
            $bg={rowColor(n)}
            $right={n === 76 ? colors.steel : '#000'}
            $open={n === 84}
          >
            <Arabic>{supplier}</Arabic>
          </Cell>
        ))}
      </Column>
      <Column $w={723}>
        {rows.map(([n, , desc, category, amount, date, dateW]) => (
          <DataRow key={n} $h={rowHeight(n)}>
            <Cell
              $w={347}
              $bg={rowColor(n)}
              $open={n === 84}
              $spill={n === 76}
              $align={n === 57 ? 'flex-start' : 'center'}
            >
              <Arabic>{desc}</Arabic>
            </Cell>
            <Cell $w={101} $bg={rowColor(n)} $open={n === 84}><Arabic>{category}</Arabic></Cell>
            <Cell $w={49} $bg={n === 58 || n === 61 ? colors.green : rowColor(n)} $open={n === 84}>
              <Fit w={amount.length * 8.8}>{amount}</Fit>
            </Cell>
            <Cell $w={226} $bg={rowColor(n)} $right="#8a8a8a" $open={n === 84}>
              <Fit w={dateW}>{date}</Fit>
            </Cell>
          </DataRow>
        ))}
      </Column>
      <Column $w={33}>
        {rows.map(([n]) => (
          <RowNumber key={n} $h={rowHeight(n)}><Fit w={16}>{n}</Fit></RowNumber>
        ))}
      </Column>
    </SheetBody>
  </Sheet>
);

/* ---------- sheet tabs and status bar ---------- */

const SheetBar = styled.section`
  display: flex;
  height: 39px;
  flex: none;
`;

const HScroll = styled.div`
  display: flex;
  align-items: center;
  width: 721px;
  height: 21px;
  margin: 8px 0 0 23px;
  padding: 0 6px;
  background: #141414;
  border-radius: 10px;
`;

const HThumb = styled.div`
  width: 611px;
  height: 11px;
  margin: 0 6px 0 74px;
  background: #999;
  border-radius: 5px;
`;

const ActiveSheet = styled.div`
  display: flex;
  justify-content: center;
  width: 59px;
  height: 35px;
  margin: -1px 0 0 4px;
  background: #fff;
  border-radius: 0 0 5px 5px;
  color: #1a1a1a;
  font-size: 18px;
  font-weight: 700;
`;

const SheetName = styled.div`
  height: 33px;
  padding-top: 4px;
  border-bottom: 3px solid #107c41;
`;

const Status = styled.footer`
  display: flex;
  align-items: center;
  height: 28px;
  flex: none;
  background: #141414;
  border-top: 1px solid #333;
  border-bottom: 1px solid #444a55;
`;

const ViewButton = styled.div`
  display: flex;
  align-items: center;
  justify-content: center;
  width: 50px;
  height: 26px;
  margin-left: ${p => (p.$active ? 23 : 0)}px;
  background: ${p => (p.$active ? '#262626' : 'transparent')};
`;

const Slider = styled.div`
  display: flex;
  align-items: center;
  width: 125px;
  margin-left: 6px;
`;

const Track = styled.div`
  width: ${p => p.$w}px;
  height: 1px;
  background: #a0a0a0;
`;

const Knob = styled.div`
  width: 6px;
  height: 14px;
  background: #b0b0b0;
`;

const Tick = styled.div`
  width: 1px;
  height: 7px;
  background: #a0a0a0;
`;

const BottomBars = () => (
  <>
    <SheetBar>
      <HScroll>
        <Svg width="9" height="11"><path d="M9 0v11L0 5.500z" fill="#aaa" /></Svg>
        <HThumb />
        <Svg width="9" height="11"><path d="M0 0v11l9-5.500z" fill="#aaa" /></Svg>
      </HScroll>
      <Slot $ml={19} $h={40}><Dots /></Slot>
      <Slot $ml={797} $h={37}>
        <Ico w={15} h={15} color="#e0e0e0"><path d="M7.500 0v15 M0 7.500h15" /></Ico>
      </Slot>
      <Separator $h={24} $mt={7} $ml={53} />
      <Slot $ml={15} $h={40} $size={17} $color="#e8e8e8"><Fit w={51}>Sheet1</Fit></Slot>
      <Separator $h={24} $mt={7} $ml={16} />
      <ActiveSheet>
        <SheetName><Fit rtl w={39}>ورقة1</Fit></SheetName>
      </ActiveSheet>
      <Slot $ml={62} $h={36}>
        <Ico w={7} h={12} color="#999"><path d="M6.500 0L.8 6l5.700 6" /></Ico>
      </Slot>
      <Slot $ml={34} $h={36}>
        <Ico w={7} h={12} color="#999"><path d="M.5 0l5.700 6L.5 12" /></Ico>
      </Slot>
    </SheetBar>
    <Status>
      <Slot $ml={14} $mt={1} $size={12.5}><Fit w={36}>Ready</Fit></Slot>
      <Slot $ml={20} $mt={1} $size={12.5}><Fit w={51}>Calculate</Fit></Slot>
      <Slot $ml={26}>
        <Ico w={18} h={18} color="#f0f0f0">
          <circle cx="8" cy="3" r="2.300" />
          <path d="M6 4L1.500 2.500.8 4.500 5.500 7v4L3 16.500l2 .8 3-5 1 1 M10 4l4.500-1.500.8 2L10.500 7v3 M10.500 10.500l7 7 M17.500 10.500l-7 7" />
        </Ico>
      </Slot>
      <Slot $ml={4} $mt={1} $size={12.5} $weight={700}><Fit w={152}>Accessibility: Investigate</Fit></Slot>
      <Slot $ml={1090}>
        <Ico w={18} h={17} color="#e0e0e0" sw={1.6}>
          <path d="M7 11H1V1h16v5 M5 14.500h3" />
          <circle cx="13" cy="11.500" r="3" strokeWidth="2.600" />
          <path d="M13 6.500v10 M8.500 9l9 5 M17.500 9l-9 5" />
        </Ico>
      </Slot>
      <Slot $ml={3} $mt={1} $size={12.5}><Fit w={92}>Display Settings</Fit></Slot>
      <ViewButton $active>
        <Ico w={17} h={17} color="#e8e8e8" sw={1.7}>
          <path d="M1 1h15v15H1z M1 6h15 M1 11h15 M6 1v15 M11 1v15" />
        </Ico>
      </ViewButton>
      <ViewButton>
        <Ico w={17} h={17} color="#e8e8e8" sw={1.7}>
          <path d="M1 1h15v15H1z M4.500 4h8v9h-8z M6 6.500h5 M6 8.500h5 M6 10.500h5" />
        </Ico>
      </ViewButton>
      <ViewButton>
        <Ico w={17} h={17} color="#e8e8e8" sw={1.7}>
          <path d="M1 1h15v15H1z M5.500 1v9 M1 10h9.500V1" />
        </Ico>
      </ViewButton>
      <Slot $ml={7}>
        <Ico w={11} h={11} color="#ddd"><path d="M0 5.500h11" /></Ico>
      </Slot>
      <Slider>
        <Track $w={53} />
        <Knob />
        <Track $w={3} />
        <Tick />
        <Track $w={62} />
      </Slider>
      <Slot $ml={6}>
        <Ico w={10} h={10} color="#ddd"><path d="M0 5h10 M5 0v10" /></Ico>
      </Slot>
      <Slot $ml={16} $mt={1} $size={12.5}><Fit w={25}>90%</Fit></Slot>
    </Status>
  </>
);

/* ---------- taskbar ---------- */

const TaskBar = styled.footer`
  display: flex;
  align-items: center;
  height: 59px;
  flex: none;
  background: linear-gradient(
    90deg,
    #20242e 0, #1d212b 300px, #16204a 390px, #142052 640px,
    #142052 960px, #1b1f38 1130px, #142052 1240px, #1a2145 1310px, #1c212b 1420px, #1b1f28 1920px
  );
`;

const TaskSearch = styled.div`
  display: flex;
  align-items: center;
  width: 275px;
  height: 40px;
  margin-left: 17px;
  padding-left: 15px;
  background: rgba(110, 120, 160, 0.36);
  border-top: 1px solid #565f85;
  border-radius: 20px;
  color: #d4d4d4;
  font-size: 16px;
`;

const AppTile = styled.div`
  display: flex;
  flex-direction: column;
  align-items: center;
  width: 49px;
  height: 49px;
  margin: 0 3px;
  padding-top: 10px;
  position: relative;
  border-radius: 5px;
  background: ${p => (p.$active ? 'rgba(120, 140, 200, 0.18)' : 'transparent')};
`;

const RunMark = styled.div`
  width: ${p => (p.$active ? 17 : 8)}px;
  height: 4px;
  margin-top: 5px;
  border-radius: 2px;
  background: ${p => (p.$active ? '#4cc2ff' : '#999')};
`;

const Badge = styled.div`
  position: absolute;
  top: ${p => p.$top}px;
  right: ${p => p.$right}px;
  display: flex;
  align-items: center;
  justify-content: center;
  width: ${p => p.$s || 20}px;
  height: ${p => p.$s || 20}px;
  border-radius: 50%;
  background: ${p => p.$bg};
  color: ${p => p.$color || '#222'};
  font-size: ${p => p.$size || 13}px;
`;

const Weather = styled.div`
  position: relative;
  width: 34px;
  height: 40px;
  margin-left: 26px;
  padding-top: 12px;
`;

const Clock = styled.div`
  display: flex;
  flex-direction: column;
  align-items: flex-end;
  width: 60px;
  margin: -2px 0 0 21px;
  font-size: 14.5px;
  line-height: 20px;
`;

const I30 = ({ children }) => (
  <Svg width="30" height="30" viewBox="0 0 30 30">{children}</Svg>
);

const Chrome = () => (
  <I30>
    <circle cx="15" cy="15" r="15" fill="#fbbc05" />
    <path d="M2 7.500A15 15 0 0 1 28 7.500L15 8 9 18z" fill="#ea4335" />
    <path d="M2 7.500A15 15 0 0 0 15 30L21.500 18.500 9 18.500z" fill="#2da44e" />
    <path d="M28 7.500H15l6.500 11L15 30A15 15 0 0 0 28 7.500z" fill="#fbbc05" />
    <circle cx="15" cy="15" r="7.300" fill="#fff" />
    <circle cx="15" cy="15" r="5.700" fill="#2f80ed" />
  </I30>
);

const Fish = () => (
  <Svg width="62" height="30" viewBox="0 0 62 30">
    <path d="M2 28c7-8 22-8 36-7l2 8H4z" fill="#39a9ee" />
    <path d="M0 10C4 1 17-1 22 8c2 5-2 10-8 10C8 18 2 16 0 10z" fill="#f39a1d" />
    <path d="M7 2c-2 4-2 11 1 15 M15 1c3 5 3 11 0 17" stroke="#fff" strokeWidth="2.400" fill="none" />
    <path d="M9 2c-1.500 4-1.500 10 1 15 M13 1c3 5 3 11 0 17" stroke="#5a3a1a" strokeWidth=".8" fill="none" />
    <path d="M11 0l6 2 M10 18l7-1" stroke="#333" strokeWidth="1.200" />
    <circle cx="4" cy="8" r="1.200" fill="#222" />
    <circle cx="28" cy="12" r="4.300" fill="#e57a25" />
    <path d="M30 24c1-8 11-9 16-5 4-8 9-10 13-8 4 4 0 14-5 17-8 3-20 2-24-4z" fill="#b9a0ee" />
    <ellipse cx="42" cy="22" rx="8" ry="6" fill="#f0e6ff" />
    <ellipse cx="43" cy="22" rx="5.500" ry="4.500" fill="#6a3e86" />
    <path d="M43 21L39 9 M44 20l-.5-13 M46 20l4-14 M48 21l7-9 M42 22l-5-6" stroke="#f6a13a" strokeWidth="1.900" strokeLinecap="round" />
    <path d="M42 20l3-6 M46 21l4-5" stroke="#e8491d" strokeWidth="2.400" strokeLinecap="round" />
    <circle cx="42" cy="21" r="2.500" fill="#f39a1d" />
    <circle cx="54" cy="24" r="3.500" fill="#f28ab2" />
  </Svg>
);

const apps = [
  {
    id: 'taskview',
    icon: (
      <I30>
        <rect x="0" y="8" width="23" height="20" rx="1" fill="#5d5d5d" />
        <rect x="8" y="1" width="22" height="19" rx="1" fill="#f2f2f2" />
        <rect x="8" y="8" width="15" height="12" fill="#b9bcb9" />
      </I30>
    ),
  },
  {
    id: 'sticky',
    icon: (
      <I30>
        <rect x="1" y="1" width="28" height="28" rx="3" fill="#fcc034" />
        <path d="M29 10C25 14 11 12 12 19c2 3 1 6 0 8C19 25 28 17 29 10z" fill="#a361c9" />
        <path d="M29 12v15l-2 2H12C20 26 27 20 29 12z" fill="#fdb71e" />
      </I30>
    ),
  },
  {
    id: 'copilot',
    icon: (
      <Svg width="30" height="30" viewBox="0 0 30 30">
        <defs>
          <linearGradient id="cpA" x1="0" y1="0" x2="0" y2="1">
            <stop offset="0" stopColor="#1b8fe0" />
            <stop offset=".5" stopColor="#55c05f" />
            <stop offset="1" stopColor="#f5c21c" />
          </linearGradient>
          <linearGradient id="cpB" x1="0" y1="0" x2="0" y2="1">
            <stop offset="0" stopColor="#a05be0" />
            <stop offset=".6" stopColor="#ee5f9a" />
            <stop offset="1" stopColor="#f5803c" />
          </linearGradient>
        </defs>
        <path d="M7 3q1-1 3-1h9q3 0 4 4l1 2h-7q-3 0-4 4l-2 8q-1 3-4 3H4q-4 0-3-5z" fill="url(#cpA)" />
        <path d="M23 27q-1 1-3 1h-8q-3 0-4-4l-1-1h6q3 0 4-4l2-8q1-3 4-3h3q4 0 3 5z" fill="url(#cpB)" />
      </Svg>
    ),
  },
  {
    id: 'store',
    icon: (
      <I30>
        <path d="M8 7V2q0-1 1-1h12q1 0 1 1v5" fill="none" stroke="#3ea6e8" strokeWidth="2" />
        <path d="M0 6h30v20q0 4-4 4H4q-4 0-4-4z" fill="#f6f6f6" />
        <path d="M9 12h5.500v5.500H9z" fill="#e0412f" />
        <path d="M15.500 12H21v5.500h-5.500z" fill="#7cb518" />
        <path d="M9 18.500h5.500V24H9z" fill="#2387e0" />
        <path d="M15.500 18.500H21V24h-5.500z" fill="#f7b500" />
      </I30>
    ),
  },
  {
    id: 'teams',
    icon: (
      <I30>
        <circle cx="16" cy="6" r="4.500" fill="#7b83eb" />
        <circle cx="26" cy="8" r="3" fill="#5059c9" />
        <path d="M20 12h10v8q-1 6-7 6z" fill="#5059c9" />
        <path d="M9 12h15v9q0 8-8 8-6 0-7-6z" fill="#7b83eb" />
        <rect x="0" y="9" width="15" height="15" rx="1.500" fill="#4b53bc" />
        <text x="7.500" y="21" fontSize="11" fontWeight="700" fill="#fff" textAnchor="middle" fontFamily="Open Sans">T</text>
      </I30>
    ),
  },
  {
    id: 'outlook',
    running: true,
    icon: (
      <I30>
        <rect x="8" y="1" width="21" height="27" rx="1.500" fill="#1066b5" />
        <path d="M19 1h9q1 0 1 1v7H19z" fill="#28a8ea" />
        <path d="M29 13L12 22v5q0 1 1 1h15q1 0 1-1z" fill="#3aa0ee" />
        <rect x="0" y="7" width="15" height="15" rx="1.500" fill="#0a5ba8" />
        <text x="7.500" y="19" fontSize="12" fontWeight="700" fill="#fff" textAnchor="middle" fontFamily="Open Sans">O</text>
      </I30>
    ),
  },
  {
    id: 'whatsapp',
    running: true,
    icon: (
      <I30>
        <path d="M2 28l2-7.500A13 13 0 1 1 9 26z" fill="none" stroke="#3dd36f" strokeWidth="2.400" />
        <path d="M9 9q2-2 3 0l1 3-1.500 2q2 4 5.500 5l2-2 3.500 2q0 4-4 4C12 22.500 7 15 9 9z" fill="#3dd36f" />
      </I30>
    ),
    badge: <Badge $bg="#45b6f2" $s={22} $top={3} $right={3}>14</Badge>,
  },
  {
    id: 'calc',
    running: true,
    icon: (
      <I30>
        <rect x="4" y="0" width="23" height="30" rx="2" fill="#7d858d" />
        <rect x="7" y="3" width="17" height="6" fill="#4cc2f5" />
        <path d="M7 11h4.500v4H7z M13 11h4.500v4H13z M19 11h4.500v4H19z M7 17h4.500v4H7z M13 17h4.500v4H13z M7 23h4.500v4H7z M13 23h4.500v4H13z" fill="#e6e9ec" />
        <path d="M19 17h5v10h-5z" fill="#0f4f94" />
      </I30>
    ),
  },
  { id: 'chrome', icon: <Chrome /> },
  {
    id: 'files',
    running: true,
    icon: (
      <I30>
        <path d="M0 4q0-2 2-2h8l3 3h15q2 0 2 2v6H0z" fill="#e19a12" />
        <path d="M0 8h30v19q0 1-1 1H1q-1 0-1-1z" fill="#ffcf57" />
        <path d="M5 28v-3q0-4 4-4h12q4 0 4 4v3z" fill="#1f7fd6" />
        <path d="M9 24.500h12" stroke="#0b5aa5" strokeWidth="1.500" />
      </I30>
    ),
  },
  {
    id: 'edge',
    running: true,
    icon: (
      <Svg width="30" height="30" viewBox="0 0 30 30">
        <defs>
          <linearGradient id="edgeA" x1="0" y1="0" x2="1" y2="0">
            <stop offset="0" stopColor="#2a9be8" />
            <stop offset="1" stopColor="#5fe06e" />
          </linearGradient>
        </defs>
        <circle cx="15" cy="15" r="15" fill="#1768b8" />
        <path d="M0 15C0 5 7 0 15 0c9 0 15 6 15 12 0 5-4 8-8 8-3 0-5-1-4-3 3-4-1-8-6-8C6 8 1 11 0 15z" fill="url(#edgeA)" />
        <path d="M12 11c-4 6 0 13 7 14 3 0 6-1 8-2 0 2-5 7-12 7C6 30 0 22 0 15c2-5 8-6 12-4z" fill="#1e86dc" />
        <path d="M14 13c-3 5 0 10 7 11 3 0 5-1 7-2-4 0-11-1-10-5-1-1-2-3-4-4z" fill="#142052" />
      </Svg>
    ),
  },
  { id: 'excel', active: true, running: true, icon: <ExcelLogo s={30} /> },
  {
    id: 'chromeA',
    running: true,
    icon: <Chrome />,
    badge: <Badge $bg="#5a3fb0" $color="#d8d0f5" $size={11} $top={3} $right={2}>A</Badge>,
  },
  {
    id: 'chromeB',
    running: true,
    icon: <Chrome />,
    badge: <Badge $bg="#80868b" $color="#e8e8e8" $size={11} $top={3} $right={2}>A</Badge>,
  },
  {
    id: 'acrobat',
    running: true,
    icon: (
      <I30>
        <rect x="1" y="0" width="28" height="28" rx="4" fill="#c80a00" />
        <path d="M6 22C12 20 15 13 14 6c2 8 5 12 11 12-7-1-14 0-19 4z" fill="none" stroke="#fff" strokeWidth="2" strokeLinejoin="round" />
      </I30>
    ),
  },
];

const Taskbar = () => (
  <TaskBar>
    <Weather>
      <Svg width="30" height="26" viewBox="0 0 30 26">
        <path d="M22 0C32 9 28 25 14 25 8 25 3 20 1 14c9 2 20-2 21-14z" fill="#f5a81c" />
      </Svg>
      <Badge $bg="#f59a8c" $top={-1} $right={0}>1</Badge>
    </Weather>
    <Slot $ml={269}>
      <Svg width="29" height="29" viewBox="0 0 29 29" fill="#45c1f7">
        <path d="M0 0h14v14H0z M15 0h14v14H15z M0 15h14v14H0z M15 15h14v14H15z" />
      </Svg>
    </Slot>
    <TaskSearch>
      <Ico w={18} h={18} color="#e6e6e6" sw={2.2}>
        <circle cx="8" cy="7.500" r="6.800" fill="#596180" />
        <path d="M12.800 12.800L18 18" />
      </Ico>
      <Slot $ml={13} $size={16}><Fit w={51}>Search</Fit></Slot>
      <Slot $ml={113} $mt={2}><Fish /></Slot>
    </TaskSearch>
    <Slot $ml={3}>
      {apps.map(a => (
        <AppTile key={a.id} $active={a.active}>
          {a.icon}
          {a.badge}
          {a.running && <RunMark $active={a.active} />}
        </AppTile>
      ))}
    </Slot>
    <Slot $ml={85}>
      <Ico w={14} h={9} color="#f0f0f0" sw={2}><path d="M.7 8.500L7 1.500l6.300 7" /></Ico>
    </Slot>
    <Slot $ml={25}>
      <Ico w={16} h={18} color="#e4e4e4" sw={1.8}>
        <path d="M1 5q7-7 14 0" />
        <circle cx="7.500" cy="11" r="5.500" />
        <circle cx="11.500" cy="14" r="4.300" fill="#e03a35" stroke="none" />
      </Ico>
    </Slot>
    <Slot $ml={22}>
      <Ico w={19} h={18} color="none">
        <path d="M4.500 0L9 2.800 4.500 5.600 0 2.800z M13.500 0L18 2.800 13.500 5.600 9 2.800z M4.500 6L9 8.800 4.500 11.600 0 8.800z M6 13l4-2v4z" fill="#f0f0f0" />
        <circle cx="13.500" cy="12.500" r="5.500" fill="#f5a31c" />
        <path d="M12 9.500v6 M15 9.500v6" stroke="#222" strokeWidth="1.500" />
      </Ico>
    </Slot>
    <Slot $ml={33} $w={10} $size={15} $mt={4}>ع</Slot>
    <Slot $ml={33}>
      <Ico w={20} h={15} color="#eee" sw={1.8}>
        <path d="M1 5.500q9-8.500 18 0 M4 8.700q6-5.500 12 0 M7 11.500q3-2.500 6 0" />
        <circle cx="10" cy="13.500" r="1.200" fill="#eee" stroke="none" />
      </Ico>
    </Slot>
    <Slot $ml={10}>
      <Ico w={20} h={15} color="#eee" sw={1.5}>
        <path d="M.8 5h3L8 1v13l-4.200-4h-3z M11 5q1.500 2.500 0 5 M13.500 3q3 4.500 0 9" />
        <path d="M16.500 1q4 6.500 0 13" stroke="#666" />
      </Ico>
    </Slot>
    <Slot $ml={10}>
      <Ico w={20} h={18} color="#eee" sw={1.5}>
        <rect x="2" y="4.500" width="15.500" height="12" rx="2.500" />
        <path d="M5.500 6.500h10v8.500h-10z M18 8h2v5h-2z" fill="#eee" stroke="none" />
        <path d="M4.500-1.500L0 5.500h2.500L1.500 11 7 4H4z" fill="#eee" stroke="#1b1f28" strokeWidth=".8" />
      </Ico>
    </Slot>
    <Clock>
      <Fit w={53}>9:56 PM</Fit>
      <Fit w={60}>7/2/2025</Fit>
    </Clock>
  </TaskBar>
);

/* ---------- watermark ---------- */

const Watermark = styled.div`
  position: absolute;
  left: 844px;
  top: 934px;
  display: flex;
  flex-direction: column;
  color: rgba(160, 160, 160, 0.5);
`;

const MarkArabic = styled.div`
  height: 78px;
  font: 700 80px/78px "DejaVu Sans", sans-serif;

  span {
    line-height: 78px;
  }
`;

const MarkLatin = styled.div`
  height: 46px;
  margin-top: 2px;
  font: 700 38px/46px "Liberation Sans", sans-serif;
`;

const App = () => (
  <Screen>
    <GlobalStyle />
    <TitleBar>
      <Slot $ml={20}><ExcelLogo /></Slot>
      <Slot $ml={20}><SaveIcon /></Slot>
      <Slot $ml={15}><UndoIcon /></Slot>
      <Slot $ml={7}><Chevron /></Slot>
      <Slot $ml={13}><UndoIcon color="#5a5a5a" flip /></Slot>
      <Slot $ml={7}><Chevron color="#777" /></Slot>
      <Slot $ml={18} $mt={2}>
        <Ico w={9} h={8} color="#fff" sw={1.5}><path d="M0 .8h9 M1 3.500l3.500 3.500L8 3.500" /></Ico>
      </Slot>
      <Slot $ml={20} $size={16} $mt={1}><Fit rtl w={133}>مصروفات وصلة مدن</Fit></Slot>
      <Slot $ml={8} $size={15} $w={6}>-</Slot>
      <Slot $ml={8} $size={15} $mt={1}><Fit w={34}>Excel</Fit></Slot>
      <SearchBox>
        <SearchIcon />
        <Slot $ml={16} $size={16}><Fit w={51}>Search</Fit></Slot>
      </SearchBox>
      <Avatar><Fit w={19}>AM</Fit></Avatar>
      <Slot $ml={38}><Ico w={13} h={3} color="#fff"><path d="M0 1h13" /></Ico></Slot>
      <Slot $ml={47}>
        <Ico w={14} h={14} color="#fff" sw={1.5}>
          <rect x=".8" y="3.200" width="10" height="10" rx="1.500" />
          <path d="M3.500 1q.5-.2 1.500-.2h5q3.200 0 3.200 3.200v5q0 1-.4 1.500" />
        </Ico>
      </Slot>
      <Slot $ml={46}>
        <Ico w={13} h={13} color="#fff" sw={1.5}><path d="M.5.5l12 12 M12.500.5l-12 12" /></Ico>
      </Slot>
    </TitleBar>
    <Tabs>
      {tabs.map(([name, w, ml, active]) => (
        <Tab key={name} $ml={ml} $active={active}><Fit w={w}>{name}</Fit></Tab>
      ))}
      <Share>
        <Ico w={14} h={14} color="#0a0a0a" sw={1.1}>
          <path d="M5 4H.8v9.300h11.500V9" />
          <path d="M3.500 9.500C4 6 6 4.500 9 4.500V1.500L13.500 6 9 10V7.500C7 7.500 5 8 3.500 9.500z" />
        </Ico>
        <Fit w={43}>Share</Fit>
        <Chevron color="#0a0a0a" sw={1.4} size={7} />
      </Share>
    </Tabs>
    <Ribbon />
    <FormulaBar />
    <Workspace>
      <VScroll>
        <Svg width="11" height="8"><path d="M0 8h11L5.500 0z" fill="#aaa" /></Svg>
        <VThumb />
        <Svg width="11" height="9"><path d="M0 0h11L5.500 9z" fill="#aaa" /></Svg>
      </VScroll>
      <Grid />
    </Workspace>
    <BottomBars />
    <Taskbar />
    <Watermark>
      <MarkArabic><Fit rtl w={231}>مستقل</Fit></MarkArabic>
      <MarkLatin><Fit w={230}>mostaql.com</Fit></MarkLatin>
    </Watermark>
  </Screen>
);

export default App;
